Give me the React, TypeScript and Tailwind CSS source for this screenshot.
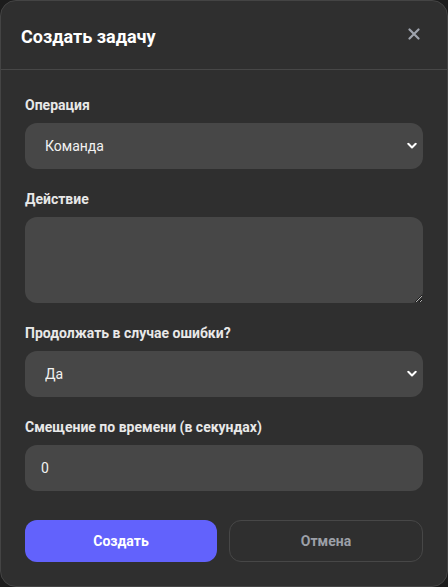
import React from "react";

const font = { fontFamily: 'Roboto, "Noto Sans", sans-serif' };

function Chevron() {
  return (
    <svg
      className="pointer-events-none absolute right-[6px] top-1/2 -translate-y-1/2"
      width="10"
      height="7"
      viewBox="0 0 10 7"
      fill="none"
    >
      <path d="M1.3 1.3 L5 5 L8.7 1.3" stroke="#ffffff" strokeWidth="2" strokeLinecap="round" strokeLinejoin="round" />
    </svg>
  );
}

function SelectField({ label, value }: { label: string; value: string }) {
  return (
    <div className="mb-5">
      <label className="mb-2 block text-[14px] font-bold leading-5 text-[#e8e8e8]">{label}</label>
      <div className="relative">
        <select
          defaultValue={value}
          className="block h-[46px] w-full appearance-none rounded-xl bg-[#474747] pl-5 pr-8 text-[14px] text-[#f2f2f2] outline-none"
          style={font}
        >
          <option>{value}</option>
        </select>
        <Chevron />
      </div>
    </div>
  );
}

export default function App() {
  return (
    <div className="h-[587px] w-[448px] bg-[#1c1c1c]" style={font}>
      <div className="flex h-[587px] w-[448px] flex-col rounded-2xl border border-[#444444] bg-[#2f2f2f]">
        <div className="flex h-[69px] items-center justify-between border-b border-[#474747] pl-[20px] pr-[27px]">
          <h2 className="mt-[3px] text-[18px] font-bold leading-6 text-white">Создать задачу</h2>
          <svg width="12" height="12" viewBox="0 0 12 12" className="mt-[-3px]">
            <path d="M1.5 1.5 L10.5 10.5 M10.5 1.5 L1.5 10.5" stroke="#9ea3ad" strokeWidth="2.2" strokeLinecap="round" />
          </svg>
        </div>
        <div className="px-[24px] pt-[25px]">
          <SelectField label="Операция" value="Команда" />
          <div className="mb-5">
            <label className="mb-2 block text-[14px] font-bold leading-5 text-[#e8e8e8]">Действие</label>
            <textarea
              className="block h-[86px] w-full rounded-xl bg-[#474747] px-5 py-3 text-[14px] text-[#f2f2f2] outline-none"
              style={font}
            />
          </div>
          <SelectField label="Продолжать в случае ошибки?" value="Да" />
          <div>
            <label className="mb-2 block text-[14px] font-bold leading-5 text-[#e8e8e8]">
              Смещение по времени (в секундах)
            </label>
            <input
              defaultValue="0"
              className="block h-[46px] w-full rounded-xl bg-[#474747] px-4 text-[14px] text-[#f2f2f2] outline-none"
              style={font}
            />
          </div>
          <div className="mt-[29px] flex gap-3">
            <button className="h-[42px] flex-1 rounded-xl bg-[#6262fc] text-[14px] font-bold text-white" style={font}>
              Создать
            </button>
            <button
              className="h-[42px] flex-1 rounded-xl border border-[#474747] text-[14px] font-bold text-[#9ca0a8]"
              style={font}
            >
              Отмена
            </button>
          </div>
        </div>
      </div>
    </div>
  );
}
